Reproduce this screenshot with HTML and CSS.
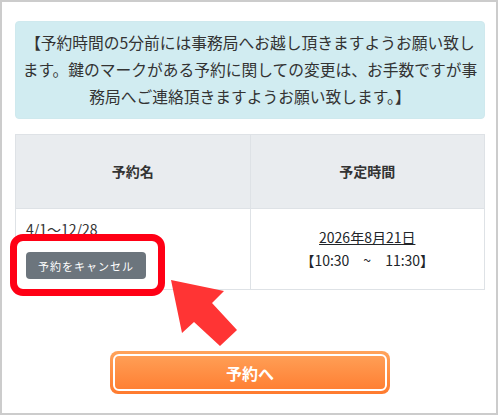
FILE: index.html
```html
<!DOCTYPE html>
<html lang="ja">
<head>
  <meta charset="UTF-8" />
  <title>予約一覧</title>
  <meta name="viewport" content="width=device-width, initial-scale=1" />
  <link rel="stylesheet" href="styles.css">
</head>

<body>
  <div class="frame">
    <!-- 注意書き -->
    <div class="notice">【予約時間の5分前には事務局へお越し頂きますようお願い致します。鍵のマークがある予約に関しての変更は、お手数ですが事務局へご連絡頂きますようお願い致します。】</div>

    <!-- 予約テーブル -->
    <table class="reserve-table">
      <thead>
        <tr>
          <th>予約名</th>
          <th>予定時間</th>
        </tr>
      </thead>
      <tbody>
        <tr>
          <td class="name-cell">
            <div class="period">4/1～12/28</div>
            <button class="btn-cancel">予約をキャンセル</button>
          </td>
          <td class="time-cell">
            <a href="#">2026年8月21日</a><br>【10:30　~　11:30】
          </td>
        </tr>
      </tbody>
    </table>

    <div class="actions">
      <button class="btn-reserve"><span>予約へ</span></button>
    </div>

    <!-- 説明用の赤枠と矢印 -->
    <div class="highlight"></div>
    <svg class="arrow" width="72" height="70" viewBox="0 0 72 70">
      <polygon points="3,2 56,13 44,25 69,52 52,68 26,44 14,55" fill="#ff3434" />
    </svg>
  </div>
</body>
</html>
```

FILE: styles.css
```css
* {
  box-sizing: border-box;
}

body {
  margin: 0;
  font-family: "Noto Sans CJK JP", sans-serif;
  color: #212529;
  background-color: #fff;
}

.frame {
  position: relative;
  width: 498px;
  height: 415px;
  border: 2px solid #cccccc;
  padding: 19px 11px 0 13px;
}

.notice {
  background-color: #d1ecf1;
  border: 1px solid #cfe9ee;
  border-radius: 4px;
  padding: 7px 3px 8px;
  font-size: 15.75px;
  line-height: 27px;
  text-align: center;
  color: #333;
}

.reserve-table {
  width: 100%;
  border-collapse: collapse;
  margin-top: 15px;
  font-size: 14px;
}

.reserve-table th,
.reserve-table td {
  border: 1px solid #dee2e6;
  width: 50%;
}

.reserve-table th {
  background-color: #e9ecef;
  font-weight: 700;
  line-height: 21px;
  padding: 26px 10px;
  color: #333;
}

.reserve-table td {
  padding: 10px;
  vertical-align: middle;
}

.period {
  line-height: 21px;
  color: #333;
}

.btn-cancel {
  display: block;
  margin-top: 12px;
  height: 27px;
  padding: 0 12px;
  border: none;
  border-radius: 4px;
  background-color: #6c757d;
  color: #fff;
  font-family: inherit;
  font-size: 11px;
  letter-spacing: 1px;
}

.time-cell {
  text-align: center;
  line-height: 23px;
}

.time-cell a {
  color: #212529;
  text-decoration: underline;
}

.actions {
  display: flex;
  justify-content: center;
  margin-top: 61px;
}

.btn-reserve {
  width: 280px;
  height: 43px;
  padding: 3px;
  border: none;
  border-radius: 8px;
  background: linear-gradient(to bottom, #ffa35a, #ff7b2f);
  font-family: inherit;
}

.btn-reserve span {
  display: flex;
  align-items: center;
  justify-content: center;
  height: 100%;
  border: 2px solid #fff;
  border-radius: 6px;
  color: #fff;
  font-size: 16px;
  font-weight: 700;
}

.highlight {
  position: absolute;
  left: 8px;
  top: 232px;
  width: 155px;
  height: 62px;
  border: 7px solid #ff0015;
  border-radius: 13px;
}

.arrow {
  position: absolute;
  left: 166px;
  top: 276px;
}
```
